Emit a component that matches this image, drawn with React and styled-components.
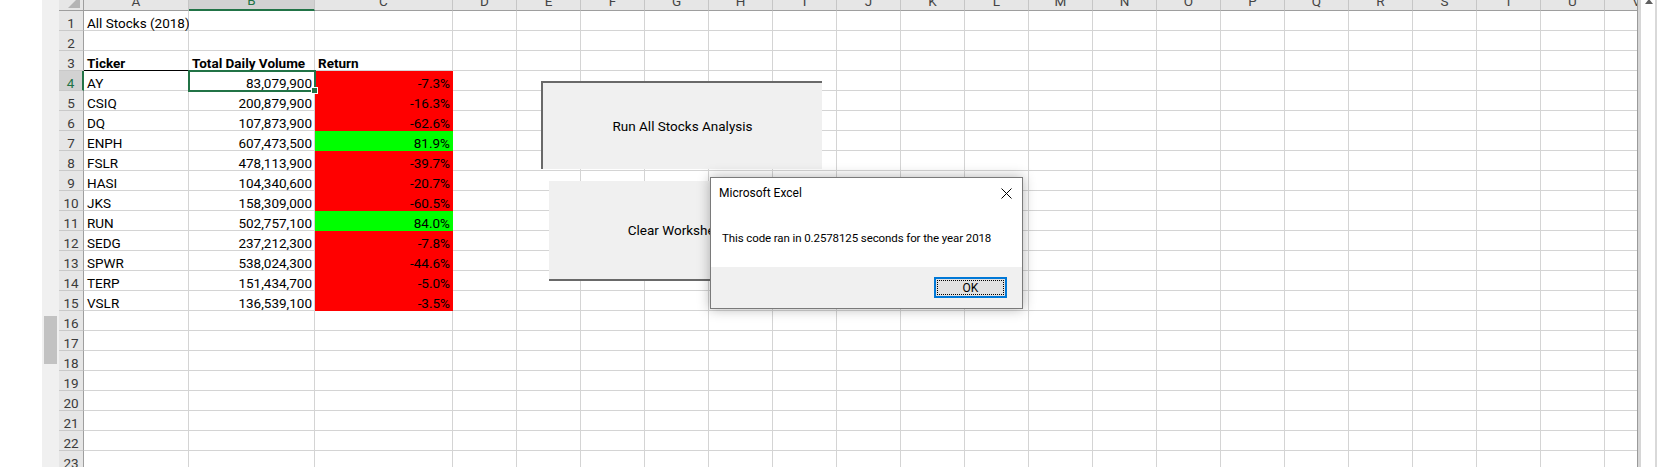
import React from "react";
import styled, { createGlobalStyle, css } from "styled-components";

const GRID = "#d4d4d4";
const EXCEL_GREEN = "#217346";

const GlobalStyle = createGlobalStyle`
  html, body {
    margin: 0;
    padding: 0;
    background: #fff;
  }
  body {
    font-family: Roboto, "Liberation Sans", sans-serif;
  }
`;

const COLUMNS = ["A", "B", "C", ..."DEFGHIJKLMNOPQRSTUV".split("")];

const stocks = [
  ["AY", "83,079,900", "-7.3%"],
  ["CSIQ", "200,879,900", "-16.3%"],
  ["DQ", "107,873,900", "-62.6%"],
  ["ENPH", "607,473,500", "81.9%"],
  ["FSLR", "478,113,900", "-39.7%"],
  ["HASI", "104,340,600", "-20.7%"],
  ["JKS", "158,309,000", "-60.5%"],
  ["RUN", "502,757,100", "84.0%"],
  ["SEDG", "237,212,300", "-7.8%"],
  ["SPWR", "538,024,300", "-44.6%"],
  ["TERP", "151,434,700", "-5.0%"],
  ["VSLR", "136,539,100", "-3.5%"],
];

// one entry per visible row, only the first three columns hold anything
function buildRows() {
  const rows = [];
  rows.push([{ text: "All Stocks (2018)" }]);
  rows.push([]);
  rows.push([
    { text: "Ticker", bold: true, rule: true },
    { text: "Total Daily Volume", bold: true },
    { text: "Return", bold: true },
  ]);
  stocks.forEach(([ticker, volume, ret], i) => {
    rows.push([
      { text: ticker },
      { text: volume, align: "right", selected: i === 0 },
      {
        text: ret,
        align: "right",
        fill: ret.startsWith("-") ? "#ff0000" : "#00ff00",
      },
    ]);
  });
  while (rows.length < 23) rows.push([]);
  return rows;
}

function App() {
  const rows = buildRows();

  return (
    <Page>
      <GlobalStyle />
      <Gutter>
        <GutterThumb />
      </Gutter>

      <SheetArea>
        <Sheet>
          <Corner>
            <svg width="12" height="12" viewBox="0 0 12 12">
              <polygon points="12,0 12,12 0,12" fill="#b4b4b4" />
            </svg>
          </Corner>
          {COLUMNS.map((name) => (
            <ColHeader key={name} $active={name === "B"}>
              {name}
            </ColHeader>
          ))}

          {rows.map((cells, r) => (
            <React.Fragment key={r}>
              <RowHeader $active={r === 3}>{r + 1}</RowHeader>
              {COLUMNS.map((name, c) => {
                const cell = cells[c] || {};
                return (
                  <Cell
                    key={name}
                    $align={cell.align}
                    $bold={cell.bold}
                    $fill={cell.fill}
                    $rule={cell.rule}
                    $selected={cell.selected}
                  >
                    {cell.text}
                  </Cell>
                );
              })}
            </React.Fragment>
          ))}
        </Sheet>
      </SheetArea>

      <VScroll>
        <svg width="8" height="5" viewBox="0 0 8 5">
          <polygon points="4,0 8,5 0,5" fill="#606060" />
        </svg>
      </VScroll>

      <RunButton>Run All Stocks Analysis</RunButton>
      <ClearButton>Clear Worksheet</ClearButton>

      <Dialog>
        <TitleBar>
          <span>Microsoft Excel</span>
          <svg width="11" height="11" viewBox="0 0 11 11">
            <path d="M0.5 0.5 L10.5 10.5 M10.5 0.5 L0.5 10.5" stroke="#000" strokeWidth="1" />
          </svg>
        </TitleBar>
        <Message>This code ran in 0.2578125 seconds for the year 2018</Message>
        <Footer>
          <OkButton>OK</OkButton>
        </Footer>
      </Dialog>
    </Page>
  );
}

export default App;

const Page = styled.div`
  position: relative;
  display: flex;
  height: 467px;
  padding-left: 42px;
  overflow: hidden;
  background: #fff;
`;

const Gutter = styled.div`
  flex: 0 0 17px;
  box-sizing: border-box;
  padding: 316px 2px 0;
  background: #f0f0f0;
`;

const GutterThumb = styled.div`
  width: 13px;
  height: 48px;
  background: #c2c2c2;
`;

const SheetArea = styled.div`
  flex: 0 0 1578px;
  overflow: hidden;
`;

const Sheet = styled.div`
  display: grid;
  grid-template-columns: 25px 105px 126px 138px repeat(19, 64px);
  grid-auto-rows: 20px;
  margin-top: -9px;
  font-size: 13.5px;
  color: #000;
`;

const Corner = styled.div`
  box-sizing: border-box;
  display: flex;
  align-items: flex-end;
  justify-content: flex-end;
  padding: 0 3px 2px 0;
  background: #e6e6e6;
  border-right: 1px solid #9e9e9e;
  border-bottom: 1px solid #9e9e9e;
`;

const ColHeader = styled.div`
  box-sizing: border-box;
  display: flex;
  align-items: flex-end;
  justify-content: center;
  line-height: 18px;
  background: ${(p) => (p.$active ? "#d2d2d2" : "#e6e6e6")};
  color: ${(p) => (p.$active ? EXCEL_GREEN : "#444")};
  border-right: 1px solid #c6c6c6;
  border-bottom: ${(p) => (p.$active ? `2px solid ${EXCEL_GREEN}` : "1px solid #9e9e9e")};
`;

const RowHeader = styled.div`
  box-sizing: border-box;
  display: flex;
  align-items: flex-end;
  justify-content: center;
  line-height: 14px;
  background: ${(p) => (p.$active ? "#d2d2d2" : "#e6e6e6")};
  color: ${(p) => (p.$active ? EXCEL_GREEN : "#3b3b3b")};
  border-bottom: 1px solid #c9c9c9;
  border-right: ${(p) => (p.$active ? `2px solid ${EXCEL_GREEN}` : "1px solid #9e9e9e")};
`;

const Cell = styled.div`
  position: relative;
  box-sizing: border-box;
  display: flex;
  align-items: flex-end;
  justify-content: ${(p) => (p.$align === "right" ? "flex-end" : "flex-start")};
  padding: 0 2px 0 3px;
  line-height: 14px;
  white-space: nowrap;
  font-weight: ${(p) => (p.$bold ? 700 : 400)};
  background: ${(p) => p.$fill || "#fff"};
  border-right: 1px solid ${(p) => p.$fill || GRID};
  border-bottom: 1px solid ${(p) => (p.$rule ? "#000" : p.$fill || GRID)};

  ${(p) =>
    p.$selected &&
    css`
      z-index: 2;
      outline: 2px solid ${EXCEL_GREEN};
      outline-offset: -1px;

      &::after {
        content: "";
        position: absolute;
        right: -4px;
        bottom: -4px;
        width: 5px;
        height: 5px;
        background: ${EXCEL_GREEN};
        border: 1px solid #fff;
      }
    `}
`;

const VScroll = styled.div`
  flex: 0 0 21px;
  box-sizing: border-box;
  display: flex;
  justify-content: center;
  align-items: flex-start;
  padding-left: 2px;
  border-left: 1px solid #9a9a9a;
  background: linear-gradient(
    to right,
    #d6d6d6 0 3px,
    #fff 3px 17px,
    #d9d9d9 17px 19px,
    #fff 19px
  );

  svg {
    margin-top: -1px;
  }
`;

const SheetButton = styled.div`
  position: absolute;
  box-sizing: border-box;
  display: flex;
  align-items: center;
  justify-content: center;
  background: #f0f0f0;
  font-size: 13.5px;
  color: #000;
  white-space: nowrap;
`;

const RunButton = styled(SheetButton)`
  left: 541px;
  top: 81px;
  width: 281px;
  height: 88px;
  border-top: 2px solid #696969;
  border-left: 2px solid #696969;
`;

const ClearButton = styled(SheetButton)`
  left: 549px;
  top: 181px;
  width: 256px;
  height: 100px;
  border-bottom: 2px solid #696969;
`;

const Dialog = styled.div`
  position: absolute;
  left: 710px;
  top: 177px;
  width: 313px;
  height: 132px;
  box-sizing: border-box;
  display: flex;
  flex-direction: column;
  background: #fff;
  border: 1px solid #7a7a7a;
  box-shadow: 0 0 12px rgba(0, 0, 0, 0.3);
  color: #000;
`;

const TitleBar = styled.div`
  flex: 0 0 30px;
  display: flex;
  align-items: center;
  justify-content: space-between;
  padding: 0 10px 0 8px;
  font-size: 12px;
`;

const Message = styled.div`
  flex: 0 0 59px;
  display: flex;
  align-items: center;
  padding-left: 11px;
  font-size: 11.5px;
  letter-spacing: -0.1px;
  white-space: nowrap;
`;

const Footer = styled.div`
  flex: 1;
  display: flex;
  align-items: center;
  justify-content: flex-end;
  padding-right: 15px;
  background: #f0f0f0;
`;

const OkButton = styled.div`
  position: relative;
  box-sizing: border-box;
  width: 73px;
  height: 21px;
  display: flex;
  align-items: center;
  justify-content: center;
  background: #e1e1e1;
  border: 2px solid #0078d7;
  font-size: 12px;

  &::after {
    content: "";
    position: absolute;
    inset: 1px;
    border: 1px dotted #000;
  }
`;
